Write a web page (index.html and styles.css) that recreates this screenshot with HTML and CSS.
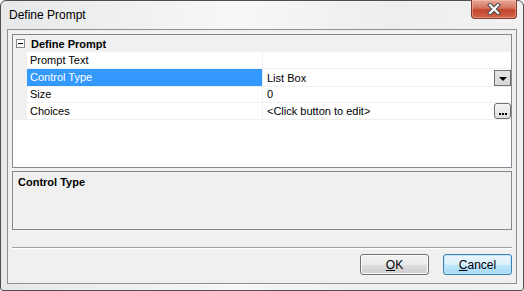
FILE: index.html
```html
<!DOCTYPE html>
<html lang="en">
<head>
  <meta charset="UTF-8" />
  <title>Define Prompt</title>
  <link rel="stylesheet" href="styles.css">
</head>
<body>
  <div class="window">
    <div class="titlebar">
      <span class="title">Define Prompt</span>
      <div class="close">
        <svg width="14" height="12" viewBox="0 0 14 12">
          <path d="M3 2 L11 10 M11 2 L3 10" stroke="#4a4a4a" stroke-width="4.2" stroke-linecap="square" />
          <path d="M3 2 L11 10 M11 2 L3 10" stroke="#ffffff" stroke-width="2.2" stroke-linecap="square" />
        </svg>
      </div>
    </div>

    <div class="client">
      <div class="grid">
        <div class="category">
          <span class="toggle"></span>
          <span class="category-label">Define Prompt</span>
        </div>
        <div class="row">
          <div class="margin"></div>
          <div class="name">Prompt Text</div>
          <div class="value"></div>
        </div>
        <div class="row selected">
          <div class="margin"></div>
          <div class="name">Control Type</div>
          <div class="value">List Box <span class="drop"><span class="arrow"></span></span></div>
        </div>
        <div class="row">
          <div class="margin"></div>
          <div class="name">Size</div>
          <div class="value">0</div>
        </div>
        <div class="row">
          <div class="margin"></div>
          <div class="name">Choices</div>
          <div class="value">&lt;Click button to edit&gt; <span class="ellipsis"><i></i><i></i><i></i></span></div>
        </div>
      </div>

      <div class="help">
        <div class="help-title">Control Type</div>
      </div>

      <div class="divider"></div>

      <div class="actions">
        <button class="btn"><u>O</u>K</button>
        <button class="btn default"><u>C</u>ancel</button>
      </div>
    </div>
  </div>
</body>
</html>
```

FILE: styles.css
```css
* {
  box-sizing: border-box;
}

body {
  margin: 0;
  background: #ffffff;
  font-family: 'Liberation Sans', Arial, sans-serif;
}

.window {
  width: 524px;
  height: 291px;
  border: 1px solid #4e4e4e;
  border-radius: 6px 6px 3px 3px;
  background: linear-gradient(to right, #e6e8ea, #f7f7f7 45%, #eceeef 75%, #f2f2f2);
  display: flex;
  flex-direction: column;
}

.titlebar {
  height: 28px;
  display: flex;
  justify-content: space-between;
  align-items: flex-start;
  padding-left: 8px;
}

.title {
  font-size: 12px;
  line-height: 15px;
  margin-top: 7px;
  color: #000000;
}

.close {
  width: 46px;
  height: 19px;
  margin-top: -1px;
  margin-right: 6px;
  border: 1px solid #7d3a2e;
  border-top: none;
  border-radius: 0 0 4px 4px;
  background: linear-gradient(#e7a899, #d4735c 45%, #c2442c 55%, #d2654b);
  box-shadow: inset 0 0 0 1px rgba(255, 200, 190, 0.45);
  display: flex;
  justify-content: center;
  align-items: center;
}

.client {
  flex: 1;
  margin: 0 6px 6px 6px;
  border: 1px solid #8e8f8f;
  background: #f0f0f0;
  padding: 4px 4px 8px 4px;
  display: flex;
  flex-direction: column;
  font-size: 11px;
}

.grid {
  height: 134px;
  border: 1px solid #828790;
  background: #ffffff;
}

.category {
  height: 17px;
  background: #f0f0f0;
  display: flex;
  align-items: center;
  padding-left: 3px;
}

.toggle {
  width: 9px;
  height: 9px;
  border: 1px solid #8a8a8a;
  background: #ffffff;
  position: relative;
  margin-right: 6px;
}

.toggle::after {
  content: '';
  position: absolute;
  left: 1px;
  top: 3px;
  width: 5px;
  height: 1px;
  background: #000000;
}

.category-label {
  font-weight: bold;
  font-size: 11px;
}

.row {
  display: grid;
  grid-template-columns: 14px 236px 1fr;
  height: 17px;
}

.margin {
  background: #f0f0f0;
}

.name,
.value {
  border-bottom: 1px solid #f0f0f0;
  line-height: 16px;
  white-space: nowrap;
}

.name {
  padding-left: 3px;
  border-right: 1px solid #f0f0f0;
}

.value {
  padding-left: 4px;
  display: flex;
  align-items: center;
  justify-content: space-between;
}

.selected .name {
  background: #3399ff;
  color: #ffffff;
}

.drop {
  width: 17px;
  height: 16px;
  border: 1px solid #6f6f6f;
  background: linear-gradient(#e6e6e6, #d6d6d6);
  display: flex;
  justify-content: center;
  align-items: flex-end;
  padding-bottom: 4px;
  margin-top: 1px;
}

.arrow {
  width: 0;
  height: 0;
  border-left: 4px solid transparent;
  border-right: 4px solid transparent;
  border-top: 4px solid #000000;
}

.ellipsis {
  width: 17px;
  height: 16px;
  border: 1px solid #6f6f6f;
  border-radius: 3px;
  background: linear-gradient(#f5f5f5, #dedede);
  display: flex;
  justify-content: center;
  align-items: flex-end;
  gap: 1px;
  padding-bottom: 3px;
  margin-top: -1px;
}

.ellipsis i {
  width: 2px;
  height: 2px;
  background: #000000;
}

.help {
  height: 59px;
  margin-top: 3px;
  border: 1px solid #828790;
  background: #f0f0f0;
  padding: 3px 5px;
}

.help-title {
  font-weight: bold;
  line-height: 14px;
}

.divider {
  margin-top: 17px;
  height: 2px;
  border-top: 1px solid #a0a0a0;
  border-bottom: 1px solid #ffffff;
}

.actions {
  margin-top: 5px;
  display: flex;
  justify-content: flex-end;
  gap: 14px;
}

.btn {
  width: 69px;
  height: 21px;
  border: 1px solid #707070;
  border-radius: 3px;
  background: linear-gradient(#f2f2f2, #ebebeb 50%, #dddddd 51%, #cfcfcf);
  box-shadow: inset 0 0 0 1px #fbfbfb;
  font-family: 'Liberation Sans', Arial, sans-serif;
  font-size: 12px;
  color: #000000;
  padding: 0;
}

.btn.default {
  border-color: #3c7fb1;
  background: linear-gradient(#eaf6fd, #d9f0fc 50%, #bee6fd 51%, #a7d9f5);
  box-shadow: inset 0 0 0 1px #c0e5fb;
}
```
